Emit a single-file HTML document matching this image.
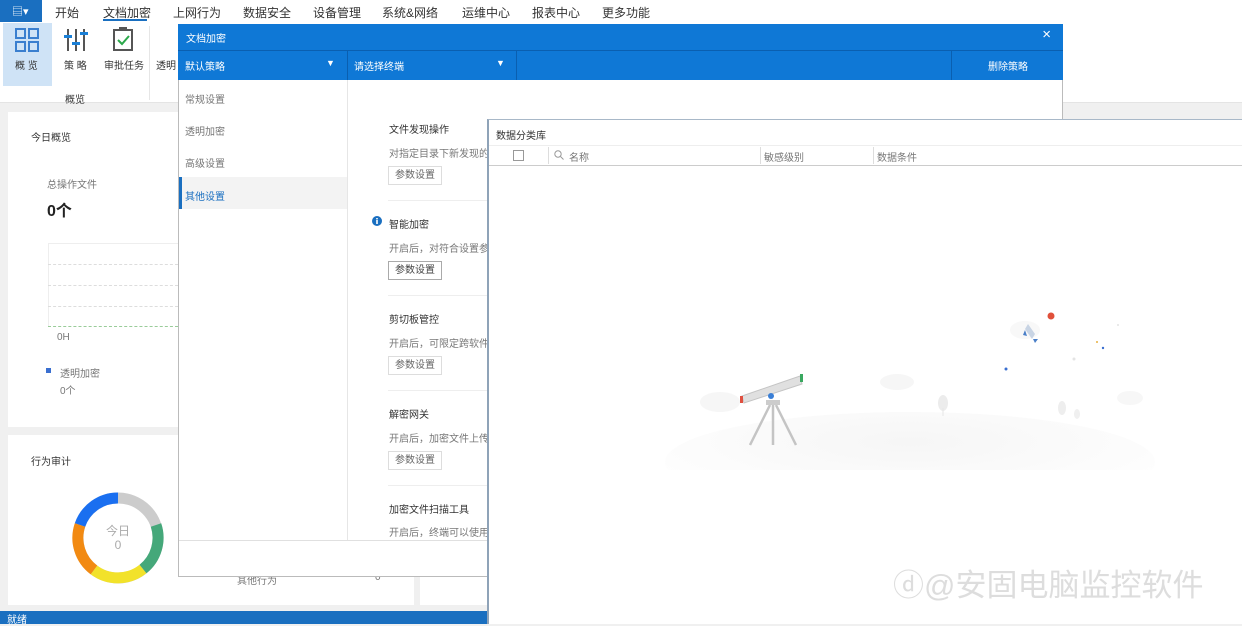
<!DOCTYPE html>
<html><head><meta charset="utf-8"><style>
*{margin:0;padding:0;box-sizing:border-box}
body{width:1242px;height:624px;overflow:hidden;background:#f0f0f0;font-family:"Liberation Sans","Noto Sans CJK SC",sans-serif;font-size:11px;color:#333;position:relative}
.a{position:absolute}
.nav{left:0;top:0;width:1242px;height:22px;background:#fff}
.nav span{position:absolute;top:4px;font-size:12px;color:#333}
.rib{left:0;top:22px;width:1242px;height:81px;background:#fff;border-bottom:1px solid #e4e4e4}
.card{background:#fff}
.btn{border:1px solid #ddd;background:#fff;color:#666;font-size:10px;width:54px;height:19px;line-height:17px;text-align:center}
.t{font-size:10px;color:#333}
.g{font-size:10px;color:#777}
</style></head><body>
<div class="a nav">
 <div class="a" style="left:0;top:0;width:42px;height:22px;background:#1a6fc0;color:#fff;font-size:11px;padding:3px 0 0 12px">▤▾</div>
 <span style="left:55px">开始</span>
 <span style="left:103px">文档加密</span>
 <div class="a" style="left:103px;top:19px;width:44px;height:2px;background:#1a6fc0"></div>
 <span style="left:173px">上网行为</span><span style="left:243px">数据安全</span><span style="left:313px">设备管理</span><span style="left:382px">系统&amp;网络</span><span style="left:462px">运维中心</span><span style="left:532px">报表中心</span><span style="left:602px">更多功能</span>
</div>
<div class="a rib">
 <div class="a" style="left:3px;top:1px;width:49px;height:63px;background:#cfe3f6"></div>
 <svg class="a" style="left:14px;top:5px" width="26" height="26"><g fill="none" stroke="#3a7fcf" stroke-width="2"><rect x="2" y="2" width="9" height="9"/><rect x="15" y="2" width="9" height="9"/><rect x="2" y="15" width="9" height="9"/><rect x="15" y="15" width="9" height="9"/></g></svg>
 <div class="a t" style="left:15px;top:35px">概 览</div>
 <svg class="a" style="left:63px;top:5px" width="26" height="26"><g stroke="#555" stroke-width="2"><line x1="5" y1="2" x2="5" y2="24"/><line x1="13" y1="2" x2="13" y2="24"/><line x1="21" y1="2" x2="21" y2="24"/></g><g fill="#1a7fd6"><rect x="1" y="8" width="8" height="3"/><rect x="9" y="15" width="8" height="3"/><rect x="17" y="5" width="8" height="3"/></g></svg>
 <div class="a t" style="left:64px;top:35px">策 略</div>
 <svg class="a" style="left:112px;top:4px" width="22" height="26"><rect x="2" y="4" width="18" height="20" fill="none" stroke="#555" stroke-width="2"/><rect x="7" y="1" width="8" height="4" fill="#555"/><path d="M6 14l4 4 7-8" fill="none" stroke="#2aa84a" stroke-width="2"/></svg>
 <div class="a t" style="left:104px;top:35px">审批任务</div>
 <div class="a t" style="left:156px;top:35px">透明</div>
 <div class="a t" style="left:65px;top:69px">概览</div>
 <div class="a" style="left:149px;top:4px;width:1px;height:74px;background:#e6e6e6"></div>
</div>
<div class="a card" style="left:8px;top:112px;width:406px;height:315px"></div>
<div class="a t" style="left:31px;top:129px">今日概览</div>
<div class="a g" style="left:47px;top:176px">总操作文件</div>
<div class="a" style="left:47px;top:197px;font-size:16px;font-weight:bold;color:#222">0个</div>
<div class="a" style="left:48px;top:243px;width:140px;height:84px;border-top:1px solid #eee;border-left:1px solid #eee"></div>
<div class="a" style="left:48px;top:264px;width:130px;border-top:1px dashed #ddd"></div>
<div class="a" style="left:48px;top:285px;width:130px;border-top:1px dashed #ddd"></div>
<div class="a" style="left:48px;top:306px;width:130px;border-top:1px dashed #ddd"></div>
<div class="a" style="left:48px;top:326px;width:130px;border-top:1px dashed #9c9"></div>
<div class="a g" style="left:57px;top:332px">0H</div>
<div class="a" style="left:46px;top:368px;width:5px;height:5px;background:#3a6fd0"></div>
<div class="a g" style="left:60px;top:365px">透明加密</div>
<div class="a g" style="left:60px;top:382px">0个</div>
<div class="a card" style="left:8px;top:435px;width:406px;height:170px"></div>
<div class="a card" style="left:420px;top:435px;width:70px;height:170px"></div>
<div class="a t" style="left:31px;top:453px">行为审计</div>
<svg class="a" style="left:72px;top:492px" width="92" height="92"><g fill="none" stroke-width="11"><circle cx="46" cy="46" r="40" stroke="#ccc"/><path d="M46 6A40 40 0 0 0 8 33" stroke="#1a6ff0"/><path d="M8 33A40 40 0 0 0 22 78" stroke="#f28a12"/><path d="M22 78A40 40 0 0 0 71 77" stroke="#f2e22a"/><path d="M71 77A40 40 0 0 0 84 33" stroke="#45a87a"/></g><text x="46" y="43" font-size="12" fill="#aaa" text-anchor="middle" font-family="Liberation Sans,Noto Sans CJK SC">今日</text><text x="46" y="57" font-size="12" fill="#aaa" text-anchor="middle">0</text></svg>
<div class="a g" style="left:237px;top:572px">其他行为</div><div class="a g" style="left:375px;top:572px">0</div>
<div class="a" style="left:0;top:611px;width:490px;height:13px;background:#1a6fc0;color:#fff;font-size:10px;padding-left:7px">就绪</div>

<!-- dialog 1 -->
<div class="a" style="left:178px;top:24px;width:885px;height:553px;background:#fff;border:1px solid #bbb"></div>
<div class="a" style="left:178px;top:24px;width:885px;height:26px;background:#0f78d6;color:#fff;font-size:10px;padding:6px 0 0 8px">文档加密<span style="position:absolute;right:12px;top:2px;font-size:15px">×</span></div>
<div class="a" style="left:178px;top:50px;width:885px;height:30px;background:#0f78d6;border-top:1px solid #0a5fb0"></div>
<div class="a" style="left:185px;top:58px;color:#fff;font-size:10px">默认策略</div><div class="a" style="left:326px;top:58px;color:#fff;font-size:9px">▼</div>
<div class="a" style="left:347px;top:50px;width:1px;height:30px;background:#0a5fb0"></div>
<div class="a" style="left:354px;top:58px;color:#fff;font-size:10px">请选择终端</div><div class="a" style="left:496px;top:58px;color:#fff;font-size:9px">▼</div>
<div class="a" style="left:516px;top:50px;width:1px;height:30px;background:#0a5fb0"></div>
<div class="a" style="left:951px;top:50px;width:1px;height:30px;background:#0a5fb0"></div>
<div class="a" style="left:988px;top:58px;color:#fff;font-size:10px">删除策略</div>
<div class="a" style="left:347px;top:80px;width:1px;height:460px;background:#e6e6e6"></div>
<div class="a" style="left:179px;top:540px;width:883px;height:1px;background:#e0e0e0"></div>
<div class="a g" style="left:185px;top:91px">常规设置</div>
<div class="a g" style="left:185px;top:123px">透明加密</div>
<div class="a g" style="left:185px;top:155px">高级设置</div>
<div class="a" style="left:179px;top:177px;width:168px;height:32px;background:#f3f3f3;border-left:3px solid #1a6fc0"></div>
<div class="a" style="left:185px;top:188px;font-size:10px;color:#1a6fc0">其他设置</div>
<div class="a t" style="left:389px;top:121px">文件发现操作</div>
<div class="a g" style="left:389px;top:145px">对指定目录下新发现的</div>
<div class="a btn" style="left:388px;top:166px">参数设置</div>
<div class="a" style="left:388px;top:200px;width:100px;height:1px;background:#eee"></div>
<svg class="a" style="left:372px;top:216px" width="10" height="10"><circle cx="5" cy="5" r="5" fill="#1a6fc0"/><rect x="4.2" y="4" width="1.6" height="4" fill="#fff"/><rect x="4.2" y="2" width="1.6" height="1.4" fill="#fff"/></svg>
<div class="a t" style="left:389px;top:216px">智能加密</div>
<div class="a g" style="left:389px;top:240px">开启后，对符合设置参</div>
<div class="a btn" style="left:388px;top:261px;border-color:#aaa;color:#444">参数设置</div>
<div class="a" style="left:388px;top:295px;width:100px;height:1px;background:#eee"></div>
<div class="a t" style="left:389px;top:311px">剪切板管控</div>
<div class="a g" style="left:389px;top:335px">开启后，可限定跨软件</div>
<div class="a btn" style="left:388px;top:356px">参数设置</div>
<div class="a" style="left:388px;top:390px;width:100px;height:1px;background:#eee"></div>
<div class="a t" style="left:389px;top:406px">解密网关</div>
<div class="a g" style="left:389px;top:430px">开启后，加密文件上传</div>
<div class="a btn" style="left:388px;top:451px">参数设置</div>
<div class="a" style="left:388px;top:485px;width:100px;height:1px;background:#eee"></div>
<div class="a t" style="left:389px;top:501px">加密文件扫描工具</div>
<div class="a g" style="left:389px;top:524px">开启后，终端可以使用</div>

<!-- dialog 2 -->
<div class="a" style="left:487px;top:119px;width:755px;height:505px;background:#fff;border-left:2px solid #8fa3b8;border-top:1px solid #a8b8c8"></div>
<div class="a t" style="left:496px;top:127px">数据分类库</div>
<div class="a" style="left:489px;top:145px;width:753px;height:21px;border-top:1px solid #eee;border-bottom:1px solid #ccc"></div>
<div class="a" style="left:513px;top:150px;width:11px;height:11px;border:1px solid #999"></div>
<div class="a" style="left:548px;top:147px;width:1px;height:17px;background:#ddd"></div>
<svg class="a" style="left:554px;top:150px" width="10" height="10"><circle cx="4" cy="4" r="3.2" fill="none" stroke="#999"/><line x1="6.5" y1="6.5" x2="9.5" y2="9.5" stroke="#999"/></svg>
<div class="a g" style="left:569px;top:149px">名称</div>
<div class="a" style="left:760px;top:147px;width:1px;height:17px;background:#ddd"></div>
<div class="a g" style="left:764px;top:149px">敏感级别</div>
<div class="a" style="left:873px;top:147px;width:1px;height:17px;background:#ddd"></div>
<div class="a g" style="left:877px;top:149px">数据条件</div>
<svg class="a" style="left:660px;top:290px" width="500" height="180">
 <defs><radialGradient id="gr" cx="0.5" cy="0.3" r="0.6"><stop offset="0" stop-color="#f6f6f6"/><stop offset="1" stop-color="#fefefe"/></radialGradient></defs>
 <ellipse cx="250" cy="172" rx="245" ry="50" fill="url(#gr)"/>
 <ellipse cx="60" cy="112" rx="20" ry="10" fill="#f6f6f6"/><ellipse cx="237" cy="92" rx="17" ry="8" fill="#f6f6f6"/><ellipse cx="470" cy="108" rx="13" ry="7" fill="#f7f7f7"/><ellipse cx="365" cy="40" rx="15" ry="9" fill="#f8f8f8"/>
 <ellipse cx="283" cy="113" rx="5" ry="8" fill="#ececec"/><line x1="283" y1="118" x2="283" y2="126" stroke="#e6e6e6"/>
 <ellipse cx="402" cy="118" rx="4" ry="7" fill="#eeeeee"/><ellipse cx="417" cy="124" rx="3" ry="5" fill="#f0f0f0"/>
 <g stroke="#c4c4c4" stroke-width="2.5"><line x1="110" y1="115" x2="90" y2="155"/><line x1="113" y1="115" x2="113" y2="155"/><line x1="116" y1="115" x2="136" y2="155"/></g>
 <rect x="106" y="110" width="14" height="5" fill="#ccc"/>
 <path d="M82 106L140 86L142 94L84 113Z" fill="#e0e0e0" stroke="#c4c4c4"/>
 <circle cx="111" cy="106" r="3" fill="#3a7fd6"/>
 <rect x="80" y="106" width="3" height="7" fill="#e05040"/><rect x="140" y="84" width="3" height="8" fill="#3aa860"/>
 <circle cx="391" cy="26" r="3.5" fill="#e0503a"/>
 <path d="M368 34l7 10-3 5-7-10z" fill="#c8d4e4"/><path d="M365 40l-2 5 4 1" fill="#4a7fc8"/><path d="M373 49l2 4 3-4" fill="#4a7fc8"/>
 <circle cx="346" cy="79" r="1.5" fill="#3a6fd0"/><circle cx="443" cy="58" r="1.2" fill="#3a6fd0"/><circle cx="437" cy="52" r="1" fill="#e8b040"/><circle cx="414" cy="69" r="1.5" fill="#e4e4e4"/><circle cx="458" cy="35" r="1" fill="#e4e4e4"/>
</svg>
<div class="a" style="left:893px;top:560px;font-size:31px;color:rgba(215,215,215,0.85)">ⓓ@安固电脑监控软件</div>
</body></html>
